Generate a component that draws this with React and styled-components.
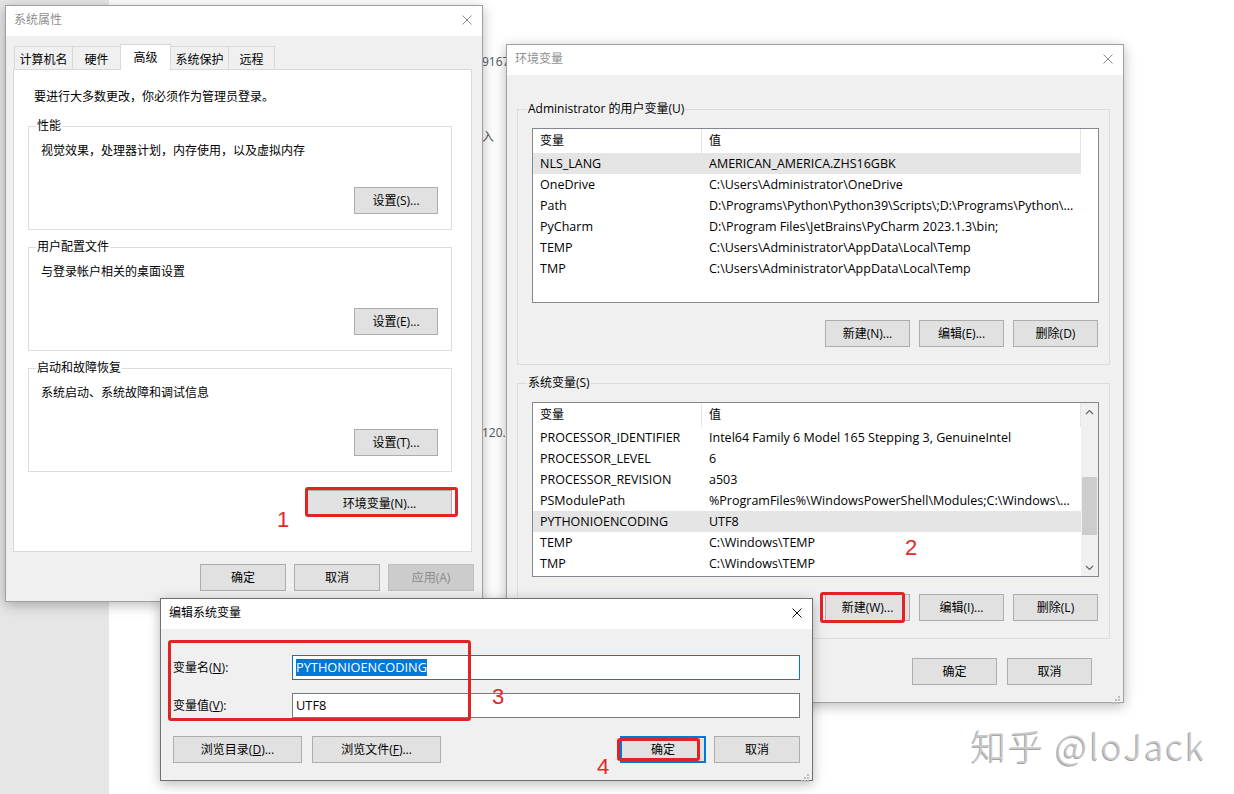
import React from 'react';
import styled, { createGlobalStyle, css } from 'styled-components';

const GlobalStyle = createGlobalStyle`
  html, body { margin: 0; padding: 0; background: #fff; }
  body {
    font-family: "Open Sans", "Noto Sans CJK SC", sans-serif;
    font-size: 12px;
    color: #000;
  }
  * { box-sizing: border-box; }
`;

const Desktop = styled.div`
  position: relative;
  width: 1234px;
  height: 794px;
  overflow: hidden;
  display: grid;
  grid-template-columns: 109px 1fr;
  background: #fff;
`;

const LeftStrip = styled.div`
  background: #e6e6e6;
`;

const PageText = styled.div`
  padding: 56px 0 0 373px;
  display: flex;
  flex-direction: column;
  align-items: flex-start;
  color: #555;
  font-size: 12px;
  line-height: 12px;
`;

const PageLine = styled.span`
  margin-top: ${(p) => p.$mt || 0}px;
`;

/* ---------- window chrome ---------- */
const Win = styled.section`
  position: absolute;
  left: ${(p) => p.$x}px;
  top: ${(p) => p.$y}px;
  width: ${(p) => p.$w}px;
  height: ${(p) => p.$h}px;
  z-index: ${(p) => p.$z};
  background: #f0f0f0;
  border: 1px solid ${(p) => (p.$active ? '#707070' : '#a0a0a0')};
  box-shadow: 0 3px 12px rgba(0, 0, 0, 0.28);
  display: flex;
  flex-direction: column;
`;

const TitleBar = styled.header`
  flex: none;
  height: 30px;
  background: #fff;
  display: flex;
  align-items: center;
  justify-content: space-between;
  padding: 0 10px 2px 8px;
  color: ${(p) => (p.$active ? '#000' : '#8f8f8f')};
  line-height: 16px;
`;

const CloseX = ({ color }) => (
  <svg width="10" height="10" viewBox="0 0 10 10">
    <path d="M0.5 0.5L9.5 9.5M9.5 0.5L0.5 9.5" stroke={color} strokeWidth="1" fill="none" />
  </svg>
);

const Grip = styled.div`
  position: absolute;
  right: 3px;
  bottom: 3px;
  width: 8px;
  height: 8px;
`;

const GripDots = () => (
  <Grip>
    <svg width="8" height="8" viewBox="0 0 8 8">
      {[
        [6, 0],
        [3, 3],
        [6, 3],
        [0, 6],
        [3, 6],
        [6, 6],
      ].map(([x, y]) => (
        <rect key={`${x}-${y}`} x={x} y={y} width="2" height="2" fill="#bcbcbc" />
      ))}
    </svg>
  </Grip>
);

/* ---------- common controls ---------- */
const Btn = styled.button`
  flex: none;
  width: ${(p) => p.$w || 85}px;
  height: 27px;
  padding: 0;
  font: inherit;
  font-size: 12px;
  line-height: 16px;
  color: #000;
  background: #e1e1e1;
  border: 1px solid #adadad;
  ${(p) =>
    p.$default &&
    css`
      border: 2px solid #0078d7;
    `}
  &:disabled {
    background: #cccccc;
    border-color: #bfbfbf;
    color: #8a8a8a;
  }
`;

const Group = styled.fieldset`
  margin: ${(p) => p.$mt || 0}px 0 0 0;
  min-width: 0;
  border: 1px solid #dcdcdc;
  padding: ${(p) => p.$pad};
  display: flex;
  flex-direction: column;
`;

const Legend = styled.legend`
  padding: 0 1px;
  margin-left: -5px;
  font-size: 12px;
  line-height: 16px;
`;

/* ---------- dialog 1 : 系统属性 ---------- */
const Body1 = styled.div`
  flex: 1;
  display: flex;
  flex-direction: column;
  padding: 10px 8px 11px 7px;
`;

const TabStrip = styled.div`
  display: flex;
  align-items: flex-end;
  height: 23px;
  padding-left: 1px;
  position: relative;
  z-index: 1;
`;

const Tab = styled.div`
  width: ${(p) => p.$w}px;
  height: 23px;
  padding-top: 3px;
  margin-left: -1px;
  border: 1px solid #d9d9d9;
  border-bottom: none;
  background: #f0f0f0;
  display: flex;
  align-items: center;
  justify-content: center;
  line-height: 16px;
  &:first-child {
    margin-left: 0;
  }
  ${(p) =>
    p.$selected &&
    css`
      height: 26px;
      padding-top: 0;
      margin-bottom: -1px;
      background: #fff;
      position: relative;
      z-index: 2;
    `}
`;

const TabPanel = styled.div`
  height: 483px;
  margin-right: 2px;
  background: #fff;
  border: 1px solid #d9d9d9;
  padding: 19px 19px 0 14px;
  display: flex;
  flex-direction: column;
`;

const Intro = styled.p`
  margin: 0 0 0 6px;
  line-height: 16px;
`;

const Desc = styled.p`
  margin: 0;
  line-height: 16px;
`;

const GroupButton = styled(Btn)`
  align-self: flex-end;
  margin-top: 28px;
`;

const EnvButton = styled(Btn)`
  align-self: flex-end;
  margin-top: 18px;
`;

const Footer = styled.div`
  display: flex;
  justify-content: flex-end;
  gap: ${(p) => p.$gap || 8}px;
  margin-top: ${(p) => p.$mt || 0}px;
  padding-right: ${(p) => p.$pr || 0}px;
`;

/* ---------- dialog 2 : 环境变量 ---------- */
const Body2 = styled.div`
  flex: 1;
  display: flex;
  flex-direction: column;
  padding: 26px 13px 17px 10px;
`;

const ListBox = styled.div`
  height: 175px;
  border: 1px solid #828790;
  background: #fff;
  display: flex;
  overflow: hidden;
`;

const ListMain = styled.div`
  flex: 1;
  min-width: 0;
`;

const ListRow = styled.div`
  display: grid;
  grid-template-columns: 169px 379px;
  width: 548px;
  height: ${(p) => (p.$head ? 24 : 21)}px;
  background: ${(p) => (p.$selected ? '#e5e5e5' : 'transparent')};
`;

const Cell = styled.div`
  padding-left: 7px;
  display: flex;
  align-items: center;
  white-space: nowrap;
  overflow: hidden;
  font-size: 12.5px;
  line-height: 16px;
  ${(p) =>
    p.$head &&
    css`
      font-size: 12px;
      border-right: 1px solid #e5e5e5;
    `}
`;

const ScrollBar = styled.div`
  flex: none;
  width: 17px;
  background: #f0f0f0;
  display: flex;
  flex-direction: column;
`;

const ScrollArrow = styled.div`
  height: 17px;
  flex: none;
  display: flex;
  align-items: center;
  justify-content: center;
`;

const ScrollTrack = styled.div`
  flex: 1;
  display: flex;
  flex-direction: column;
`;

const Thumb = styled.div`
  margin: 57px 1px 0 1px;
  height: 58px;
  background: #cdcdcd;
`;

const Chevron = ({ up }) => (
  <svg width="9" height="6" viewBox="0 0 9 6">
    <path
      d={up ? 'M1 5L4.5 1.5L8 5' : 'M1 1L4.5 4.5L8 1'}
      stroke="#606060"
      strokeWidth="1.1"
      fill="none"
    />
  </svg>
);

const ButtonRow = styled.div`
  display: flex;
  justify-content: flex-end;
  gap: 9px;
  margin-top: 17px;
  padding-right: 1px;
`;

/* ---------- dialog 3 : 编辑系统变量 ---------- */
const Body3 = styled.div`
  flex: 1;
  display: flex;
  flex-direction: column;
  padding: 26px 12px 17px 12px;
`;

const FormGrid = styled.div`
  display: grid;
  grid-template-columns: 119px 508px;
  row-gap: 13px;
  align-items: center;
`;

const FieldLabel = styled.label`
  line-height: 16px;
`;

const TextField = styled.div`
  height: 25px;
  border: 1px solid ${(p) => (p.$focused ? '#0078d7' : '#7a7a7a')};
  background: #fff;
  padding: 0 3px;
  display: flex;
  align-items: center;
  font-size: 12.8px;
  line-height: 17px;
  white-space: nowrap;
`;

const Selection = styled.span`
  background: #0078d7;
  color: #fff;
`;

const DialogButtons = styled.div`
  display: flex;
  justify-content: space-between;
  margin-top: 18px;
`;

const BtnGroup = styled.div`
  display: flex;
  gap: ${(p) => p.$gap}px;
`;

/* ---------- annotations ---------- */
const Mark = styled.div`
  position: absolute;
  left: ${(p) => p.$x}px;
  top: ${(p) => p.$y}px;
  width: ${(p) => p.$w}px;
  height: ${(p) => p.$h}px;
  border: 3px solid #e02424;
  border-radius: 3px;
  z-index: 20;
  pointer-events: none;
`;

const StepNum = styled.div`
  position: absolute;
  left: ${(p) => p.$x}px;
  top: ${(p) => p.$y}px;
  z-index: 20;
  font-family: "Liberation Sans", sans-serif;
  font-size: 22px;
  line-height: 26px;
  color: #e02a2a;
`;

const Watermark = styled.div`
  position: absolute;
  left: 971px;
  top: 721px;
  z-index: 5;
  font-family: "Noto Sans CJK SC", sans-serif;
  font-size: 35px;
  font-weight: 300;
  line-height: 48px;
  letter-spacing: 2.2px;
  color: #c9c9c9;
  text-shadow: -1px 1px 0 #a2a2a2;
  white-space: nowrap;
`;

/* ---------- data ---------- */
const tabs = [
  ['计算机名', 59],
  ['硬件', 49],
  ['高级', 51, true],
  ['系统保护', 59],
  ['远程', 47],
];

const groups = [
  ['性能', '视觉效果，处理器计划，内存使用，以及虚拟内存', '设置(S)...'],
  ['用户配置文件', '与登录帐户相关的桌面设置', '设置(E)...'],
  ['启动和故障恢复', '系统启动、系统故障和调试信息', '设置(T)...'],
];

const userVars = [
  ['NLS_LANG', 'AMERICAN_AMERICA.ZHS16GBK', true],
  ['OneDrive', 'C:\\Users\\Administrator\\OneDrive'],
  ['Path', 'D:\\Programs\\Python\\Python39\\Scripts\\;D:\\Programs\\Python\\...'],
  ['PyCharm', 'D:\\Program Files\\JetBrains\\PyCharm 2023.1.3\\bin;'],
  ['TEMP', 'C:\\Users\\Administrator\\AppData\\Local\\Temp'],
  ['TMP', 'C:\\Users\\Administrator\\AppData\\Local\\Temp'],
];

const sysVars = [
  ['PROCESSOR_IDENTIFIER', 'Intel64 Family 6 Model 165 Stepping 3, GenuineIntel'],
  ['PROCESSOR_LEVEL', '6'],
  ['PROCESSOR_REVISION', 'a503'],
  ['PSModulePath', '%ProgramFiles%\\WindowsPowerShell\\Modules;C:\\Windows\\...'],
  ['PYTHONIOENCODING', 'UTF8', true],
  ['TEMP', 'C:\\Windows\\TEMP'],
  ['TMP', 'C:\\Windows\\TEMP'],
];

const VarList = ({ rows, scroll }) => (
  <ListBox>
    <ListMain>
      <ListRow $head>
        <Cell $head>变量</Cell>
        <Cell $head>值</Cell>
      </ListRow>
      {rows.map(([k, v, sel], i) => (
        <ListRow key={i} $selected={sel}>
          <Cell>{k}</Cell>
          <Cell>{v}</Cell>
        </ListRow>
      ))}
    </ListMain>
    {scroll && (
      <ScrollBar>
        <ScrollArrow>
          <Chevron up />
        </ScrollArrow>
        <ScrollTrack>
          <Thumb />
        </ScrollTrack>
        <ScrollArrow>
          <Chevron />
        </ScrollArrow>
      </ScrollBar>
    )}
  </ListBox>
);

export default function App() {
  return (
    <>
      <GlobalStyle />
      <Desktop>
        <LeftStrip />
        <PageText>
          <PageLine>9167</PageLine>
          <PageLine $mt={63}>入</PageLine>
          <PageLine $mt={284}>120.</PageLine>
        </PageText>

        {/* 系统属性 */}
        <Win $x={5} $y={5} $w={478} $h={597} $z={1}>
          <TitleBar>
            <span>系统属性</span>
            <CloseX color="#8a8a8a" />
          </TitleBar>
          <Body1>
            <TabStrip>
              {tabs.map(([t, w, sel]) => (
                <Tab key={t} $w={w} $selected={sel}>
                  {t}
                </Tab>
              ))}
            </TabStrip>
            <TabPanel>
              <Intro>要进行大多数更改，你必须作为管理员登录。</Intro>
              {groups.map(([title, desc, btn], i) => (
                <Group key={title} $mt={i === 0 ? 13 : 9} $pad="9px 13px 15px 12px">
                  <Legend>{title}</Legend>
                  <Desc>{desc}</Desc>
                  <GroupButton $w={84}>{btn}</GroupButton>
                </Group>
              ))}
              <EnvButton $w={145}>环境变量(N)...</EnvButton>
            </TabPanel>
            <Footer $mt={12} $gap={8}>
              <Btn $w={86}>确定</Btn>
              <Btn $w={86}>取消</Btn>
              <Btn $w={86} disabled>
                应用(A)
              </Btn>
            </Footer>
          </Body1>
        </Win>

        {/* 环境变量 */}
        <Win $x={506} $y={44} $w={618} $h={659} $z={2}>
          <TitleBar>
            <span>环境变量</span>
            <CloseX color="#8a8a8a" />
          </TitleBar>
          <Body2>
            <Group $pad="11px 10px 17px 14px">
              <Legend>Administrator 的用户变量(U)</Legend>
              <VarList rows={userVars} />
              <ButtonRow>
                <Btn>新建(N)...</Btn>
                <Btn>编辑(E)...</Btn>
                <Btn>删除(D)</Btn>
              </ButtonRow>
            </Group>
            <Group $mt={10} $pad="11px 10px 17px 14px">
              <Legend>系统变量(S)</Legend>
              <VarList rows={sysVars} scroll />
              <ButtonRow>
                <Btn>新建(W)...</Btn>
                <Btn>编辑(I)...</Btn>
                <Btn>删除(L)</Btn>
              </ButtonRow>
            </Group>
            <Footer $mt={19} $gap={10} $pr={18}>
              <Btn>确定</Btn>
              <Btn>取消</Btn>
            </Footer>
          </Body2>
          <GripDots />
        </Win>

        {/* 编辑系统变量 */}
        <Win $x={160} $y={598} $w={653} $h={183} $z={3} $active>
          <TitleBar $active>
            <span>编辑系统变量</span>
            <CloseX color="#111" />
          </TitleBar>
          <Body3>
            <FormGrid>
              <FieldLabel>
                变量名(<u>N</u>):
              </FieldLabel>
              <TextField $focused>
                <Selection>PYTHONIOENCODING</Selection>
              </TextField>
              <FieldLabel>
                变量值(<u>V</u>):
              </FieldLabel>
              <TextField>UTF8</TextField>
            </FormGrid>
            <DialogButtons>
              <BtnGroup $gap={10}>
                <Btn $w={129}>
                  浏览目录(<u>D</u>)...
                </Btn>
                <Btn $w={129}>
                  浏览文件(<u>F</u>)...
                </Btn>
              </BtnGroup>
              <BtnGroup $gap={8}>
                <Btn $w={86} $default>
                  确定
                </Btn>
                <Btn $w={86}>取消</Btn>
              </BtnGroup>
            </DialogButtons>
          </Body3>
          <GripDots />
        </Win>

        {/* annotations */}
        <Mark $x={305} $y={487} $w={153} $h={30} />
        <StepNum $x={277} $y={507}>1</StepNum>
        <Mark $x={820} $y={592} $w={85} $h={31} />
        <StepNum $x={905} $y={535}>2</StepNum>
        <Mark $x={168} $y={640} $w={303} $h={81} />
        <StepNum $x={492} $y={684}>3</StepNum>
        <Mark $x={617} $y={738} $w={83} $h={23} />
        <StepNum $x={597} $y={754}>4</StepNum>

        <Watermark>知乎 @loJack</Watermark>
      </Desktop>
    </>
  );
}
